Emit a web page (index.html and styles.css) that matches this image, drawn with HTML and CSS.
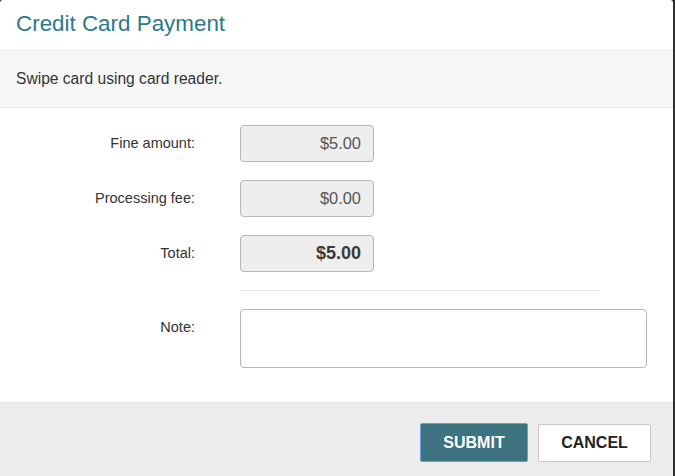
FILE: index.html
```html
<!DOCTYPE html>
<html>
<head>
<meta charset="utf-8">
<link rel="stylesheet" href="styles.css">
</head>
<body>
<div class="modal">
  <div class="modal-header"><h1 class="title">Credit Card Payment</h1></div>
  <div class="notice">Swipe card using card reader.</div>
  <div class="modal-body">
    <div class="form-grid">
      <label class="label">Fine amount:</label>
      <div class="field">$5.00</div>
      <label class="label">Processing fee:</label>
      <div class="field">$0.00</div>
      <label class="label">Total:</label>
      <div class="field total">$5.00</div>
      <div class="spacer"></div>
      <hr class="divider">
      <label class="label">Note:</label>
      <textarea class="note"></textarea>
    </div>
  </div>
  <div class="modal-footer">
    <button class="btn btn-primary">SUBMIT</button>
    <button class="btn btn-default">CANCEL</button>
  </div>
</div>
</body>
</html>
```
FILE: styles.css
```css
html, body {
  margin: 0;
  padding: 0;
  background: #2f2f2f;
  font-family: "Liberation Sans", Arial, sans-serif;
  color: #333;
}
.modal {
  width: 673px;
  height: 476px;
  background: #fff;
  border-radius: 3px 3px 0 0;
  overflow: hidden;
  display: flex;
  flex-direction: column;
}
.modal-header {
  height: 51px;
  box-sizing: border-box;
  padding: 0 16px;
  display: flex;
  align-items: center;
  border-bottom: 1px solid #e9e9e9;
}
.title {
  margin: 0;
  font-size: 22.4px;
  font-weight: normal;
  color: #2b7a8b;
  line-height: 1;
  padding-bottom: 1px;
}
.notice {
  height: 57px;
  box-sizing: border-box;
  padding: 0 16px;
  display: flex;
  align-items: center;
  background: #f7f7f7;
  border-bottom: 1px solid #e6e6e6;
  font-size: 15.6px;
  color: #333;
}
.modal-body {
  padding: 17px 0 34px;
}
.form-grid {
  display: grid;
  grid-template-columns: 195px 407px;
  column-gap: 45px;
  row-gap: 18px;
}
.label {
  text-align: right;
  font-size: 14.5px;
  line-height: 37px;
  color: #333;
}
.field {
  width: 134px;
  height: 37px;
  box-sizing: border-box;
  border: 1px solid #b9b5b1;
  border-radius: 4px;
  background: #eee;
  text-align: right;
  padding-right: 12px;
  line-height: 35px;
  font-size: 16.4px;
  color: #555;
}
.field.total {
  font-weight: bold;
  font-size: 18px;
  color: #3a3a3a;
}
.divider {
  margin: 0;
  width: 360px;
  height: 0;
  border: none;
  border-top: 1px solid #ebebeb;
}
.note {
  display: block;
  width: 407px;
  height: 59px;
  box-sizing: border-box;
  margin: 0;
  border: 1px solid #b9b5b1;
  border-radius: 4px;
  background: #fff;
  resize: none;
  font-family: inherit;
}
.modal-footer {
  flex: 1;
  background: #ececec;
  border-top: 1px solid #e2e2e2;
  display: flex;
  justify-content: flex-end;
  align-items: flex-start;
  gap: 10px;
  padding: 20px 22px 0 0;
}
.btn {
  height: 39px;
  box-sizing: border-box;
  font-family: "Liberation Sans", Arial, sans-serif;
  font-size: 16px;
  font-weight: bold;
  border-radius: 2px;
  margin: 0;
}
.btn-primary {
  width: 108px;
  background: #3d727f;
  color: #fff;
  border: 1px solid #6b9de0;
}
.btn-default {
  width: 113px;
  margin-top: 1px;
  height: 38px;
  background: #fff;
  color: #222;
  border: 1px solid #c8c8c8;
}
```
